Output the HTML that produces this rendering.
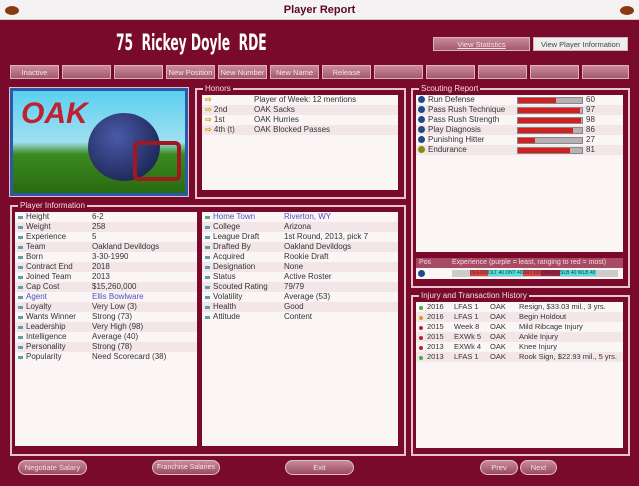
<!DOCTYPE html><html><head><style>
*{margin:0;padding:0;box-sizing:border-box}
body{width:639px;height:486px;overflow:hidden;background:#7a0a2c;font-family:"Liberation Sans",sans-serif;font-size:8px;color:#333;position:relative}
.a{position:absolute}
.title{left:0;top:0;width:639px;height:20px;background:#f4f2f2;text-align:center;font-size:11px;font-weight:bold;line-height:20px;color:#5a0a20;border-bottom:1px solid #ccc}
.ball{width:14px;height:9px;border-radius:50%;background:#8a3a10;top:6px}
.frame{border:2px solid #e8c4cf}
.lbl{font-size:8px;color:#f4dce4;background:#7a0a2c;padding:0 2px;top:-6px;left:6px;position:absolute;line-height:10px}
.list{background:#fbf5f6}
.btn{background:linear-gradient(#c98a9c,#a45a70);border:1px solid #d8b0bc;color:#f4e4ea;text-align:center;font-size:7.5px;line-height:13px;white-space:nowrap}
.rb{border-radius:8px;background:linear-gradient(#c88c9c,#9a4a62);border:1px solid #e0c0c8;color:#f4e6ea;text-align:center;font-size:7.5px;line-height:14px;white-space:nowrap}
.row{height:10px;line-height:10px;position:relative;white-space:nowrap}
.row:nth-child(even){background:#f3e6e9}
.row span{position:absolute}
.d{width:5px;height:3px;background:#5aa0a8;top:4px;left:3px}
.bar{position:absolute;left:101px;top:2px;width:66px;height:7px;background:#b8b0b2;border:1px solid #888}
.bar i{display:block;height:100%;background:#d02020}
.dot{width:7px;height:7px;border-radius:50%;background:#1e4a8a;top:1px;left:2px}
.ar{color:#d0a020}
.inj{font-size:7.5px}
</style></head><body>
<div class="a title">Player Report</div>
<div class="a ball" style="left:5px"></div><div class="a ball" style="left:620px"></div>
<div class="a" style="left:116px;top:31px;font-size:22px;font-weight:bold;color:#fff;font-family:'DejaVu Sans Condensed','Liberation Sans',sans-serif;transform:scaleX(0.62);transform-origin:left top;white-space:nowrap">75&nbsp; Rickey Doyle&nbsp; RDE</div>
<div class="a btn" style="left:433px;top:37px;width:97px;height:14px;text-decoration:underline">View Statistics</div>
<div class="a btn" style="left:533px;top:37px;width:95px;height:14px;background:#eee;color:#444">View Player Information</div>
<div class="a btn" style="left:10px;top:65px;width:49px;height:14px">Inactive</div>
<div class="a btn" style="left:62px;top:65px;width:49px;height:14px"></div>
<div class="a btn" style="left:114px;top:65px;width:49px;height:14px"></div>
<div class="a btn" style="left:166px;top:65px;width:49px;height:14px">New Position</div>
<div class="a btn" style="left:218px;top:65px;width:49px;height:14px">New Number</div>
<div class="a btn" style="left:270px;top:65px;width:49px;height:14px">New Name</div>
<div class="a btn" style="left:322px;top:65px;width:49px;height:14px">Release</div>
<div class="a btn" style="left:374px;top:65px;width:49px;height:14px"></div>
<div class="a btn" style="left:426px;top:65px;width:49px;height:14px"></div>
<div class="a btn" style="left:478px;top:65px;width:49px;height:14px"></div>
<div class="a btn" style="left:530px;top:65px;width:49px;height:14px"></div>
<div class="a btn" style="left:582px;top:65px;width:47px;height:14px"></div>

<div class="a" style="left:10px;top:88px;width:178px;height:108px;border:3px solid #2a5aa8;background:linear-gradient(#5ad0f0 0%,#a0e0f0 50%,#3a8a20 62%,#2a6a10 100%);outline:1px solid #e0c0cc;overflow:hidden">
<div class="a" style="left:8px;top:6px;font-size:30px;font-weight:bold;font-style:italic;color:#c02030">OAK</div>
<div class="a" style="left:75px;top:22px;width:72px;height:68px;border-radius:50%;background:radial-gradient(circle at 40% 35%,#4a5aa8,#101840)"></div>
<div class="a" style="left:120px;top:50px;width:48px;height:40px;border:4px solid #a01820;border-radius:6px"></div>
</div>

<div class="a frame" style="left:195px;top:88px;width:211px;height:111px"><div class="lbl">Honors</div></div>
<div class="a list" style="left:202px;top:95px;width:196px;height:95px">
<div class="row"><span style="left:3px"><b class="ar">⇨</b></span><span style="left:52px">Player of Week: 12 mentions</span></div>
<div class="row"><span style="left:3px"><b class="ar">⇨</b> 2nd</span><span style="left:52px">OAK Sacks</span></div>
<div class="row"><span style="left:3px"><b class="ar">⇨</b> 1st</span><span style="left:52px">OAK Hurries</span></div>
<div class="row"><span style="left:3px"><b class="ar">⇨</b> 4th (t)</span><span style="left:52px">OAK Blocked Passes</span></div>
</div>

<div class="a frame" style="left:411px;top:88px;width:219px;height:200px"><div class="lbl">Scouting Report</div></div>
<div class="a list" style="left:416px;top:95px;width:207px;height:157px">
<div class="row"><i class="a dot"></i><span style="left:12px">Run Defense</span><div class="bar"><i style="width:60%"></i></div><span style="left:170px">60</span></div>
<div class="row"><i class="a dot"></i><span style="left:12px">Pass Rush Technique</span><div class="bar"><i style="width:97%"></i></div><span style="left:170px">97</span></div>
<div class="row"><i class="a dot"></i><span style="left:12px">Pass Rush Strength</span><div class="bar"><i style="width:98%"></i></div><span style="left:170px">98</span></div>
<div class="row"><i class="a dot"></i><span style="left:12px">Play Diagnosis</span><div class="bar"><i style="width:86%"></i></div><span style="left:170px">86</span></div>
<div class="row"><i class="a dot"></i><span style="left:12px">Punishing Hitter</span><div class="bar"><i style="width:27%"></i></div><span style="left:170px">27</span></div>
<div class="row"><i class="a dot" style="background:#8a8a10"></i><span style="left:12px">Endurance</span><div class="bar"><i style="width:81%"></i></div><span style="left:170px">81</span></div>
</div>
<div class="a" style="left:416px;top:258px;width:207px;height:10px;background:#a84a64;color:#f4dce4;font-size:7px;line-height:10px"><span style="padding-left:3px">Pos</span><span style="position:absolute;left:36px">Experience (purple = least, ranging to red = most)</span></div>
<div class="a list" style="left:416px;top:268px;width:207px;height:11px">
<i class="a dot" style="top:2px"></i>
<div class="a" style="left:36px;top:2px;width:166px;height:7px;background:#ccc;font-size:5px;line-height:7px;padding-left:18px;white-space:nowrap;overflow:hidden"><span style="background:#e04040">DLE100</span><span style="background:#50e0e0">DLT 40 DNT 40</span><span style="background:#e04040">DRT100</span><span style="background:#a02040">DRE100</span><span style="background:#50e0e0">SLB 40 WLB 40</span></div>
</div>

<div class="a frame" style="left:10px;top:205px;width:396px;height:251px"><div class="lbl">Player Information</div></div>
<div class="a list" style="left:15px;top:212px;width:182px;height:234px">
<div class="row"><i class="a d"></i><span style="left:11px">Height</span><span style="left:77px">6-2</span></div>
<div class="row"><i class="a d"></i><span style="left:11px">Weight</span><span style="left:77px">258</span></div>
<div class="row"><i class="a d"></i><span style="left:11px">Experience</span><span style="left:77px">5</span></div>
<div class="row"><i class="a d"></i><span style="left:11px">Team</span><span style="left:77px">Oakland Devildogs</span></div>
<div class="row"><i class="a d"></i><span style="left:11px">Born</span><span style="left:77px">3-30-1990</span></div>
<div class="row"><i class="a d"></i><span style="left:11px">Contract End</span><span style="left:77px">2018</span></div>
<div class="row"><i class="a d"></i><span style="left:11px">Joined Team</span><span style="left:77px">2013</span></div>
<div class="row"><i class="a d"></i><span style="left:11px">Cap Cost</span><span style="left:77px">$15,260,000</span></div>
<div class="row" style="color:#5050c0"><i class="a d"></i><span style="left:11px">Agent</span><span style="left:77px">Ellis Bowlware</span></div>
<div class="row"><i class="a d"></i><span style="left:11px">Loyalty</span><span style="left:77px">Very Low (3)</span></div>
<div class="row"><i class="a d"></i><span style="left:11px">Wants Winner</span><span style="left:77px">Strong (73)</span></div>
<div class="row"><i class="a d"></i><span style="left:11px">Leadership</span><span style="left:77px">Very High (98)</span></div>
<div class="row"><i class="a d"></i><span style="left:11px">Intelligence</span><span style="left:77px">Average (40)</span></div>
<div class="row"><i class="a d"></i><span style="left:11px">Personality</span><span style="left:77px">Strong (78)</span></div>
<div class="row"><i class="a d"></i><span style="left:11px">Popularity</span><span style="left:77px">Need Scorecard (38)</span></div>
</div>
<div class="a list" style="left:202px;top:212px;width:196px;height:234px">
<div class="row" style="color:#5050c0"><i class="a d"></i><span style="left:11px">Home Town</span><span style="left:82px">Riverton, WY</span></div>
<div class="row"><i class="a d"></i><span style="left:11px">College</span><span style="left:82px">Arizona</span></div>
<div class="row"><i class="a d"></i><span style="left:11px">League Draft</span><span style="left:82px">1st Round, 2013, pick 7</span></div>
<div class="row"><i class="a d"></i><span style="left:11px">Drafted By</span><span style="left:82px">Oakland Devildogs</span></div>
<div class="row"><i class="a d"></i><span style="left:11px">Acquired</span><span style="left:82px">Rookie Draft</span></div>
<div class="row"><i class="a d"></i><span style="left:11px">Designation</span><span style="left:82px">None</span></div>
<div class="row"><i class="a d"></i><span style="left:11px">Status</span><span style="left:82px">Active Roster</span></div>
<div class="row"><i class="a d"></i><span style="left:11px">Scouted Rating</span><span style="left:82px">79/79</span></div>
<div class="row"><i class="a d"></i><span style="left:11px">Volatility</span><span style="left:82px">Average (53)</span></div>
<div class="row"><i class="a d"></i><span style="left:11px">Health</span><span style="left:82px">Good</span></div>
<div class="row"><i class="a d"></i><span style="left:11px">Attitude</span><span style="left:82px">Content</span></div>
</div>

<div class="a frame" style="left:411px;top:295px;width:219px;height:161px"><div class="lbl">Injury and Transaction History</div></div>
<div class="a list inj" style="left:416px;top:302px;width:207px;height:146px;overflow:hidden">
<div class="row"><i class="a d" style="background:#40b040;width:4px;height:4px;border-radius:50%"></i><span style="left:11px">2016</span><span style="left:38px">LFAS 1</span><span style="left:74px">OAK</span><span style="left:103px">Resign, $33.03 mil., 3 yrs.</span></div>
<div class="row"><i class="a d" style="background:#d0a020;width:4px;height:4px;border-radius:50%"></i><span style="left:11px">2016</span><span style="left:38px">LFAS 1</span><span style="left:74px">OAK</span><span style="left:103px">Begin Holdout</span></div>
<div class="row"><i class="a d" style="background:#c02030;width:4px;height:4px;border-radius:50%"></i><span style="left:11px">2015</span><span style="left:38px">Week 8</span><span style="left:74px">OAK</span><span style="left:103px">Mild Ribcage Injury</span></div>
<div class="row"><i class="a d" style="background:#c02030;width:4px;height:4px;border-radius:50%"></i><span style="left:11px">2015</span><span style="left:38px">EXWk 5</span><span style="left:74px">OAK</span><span style="left:103px">Ankle Injury</span></div>
<div class="row"><i class="a d" style="background:#c02030;width:4px;height:4px;border-radius:50%"></i><span style="left:11px">2013</span><span style="left:38px">EXWk 4</span><span style="left:74px">OAK</span><span style="left:103px">Knee Injury</span></div>
<div class="row"><i class="a d" style="background:#40b040;width:4px;height:4px;border-radius:50%"></i><span style="left:11px">2013</span><span style="left:38px">LFAS 1</span><span style="left:74px">OAK</span><span style="left:103px">Rook Sign, $22.93 mil., 5 yrs.</span></div>
</div>

<div class="a rb" style="left:18px;top:460px;width:69px;height:15px">Negotiate Salary</div>
<div class="a rb" style="left:152px;top:460px;width:68px;height:15px;font-size:7px">Franchise Salaries</div>
<div class="a rb" style="left:285px;top:460px;width:69px;height:15px">Exit</div>
<div class="a rb" style="left:480px;top:460px;width:38px;height:15px">Prev</div>
<div class="a rb" style="left:520px;top:460px;width:37px;height:15px">Next</div>
</body></html>
